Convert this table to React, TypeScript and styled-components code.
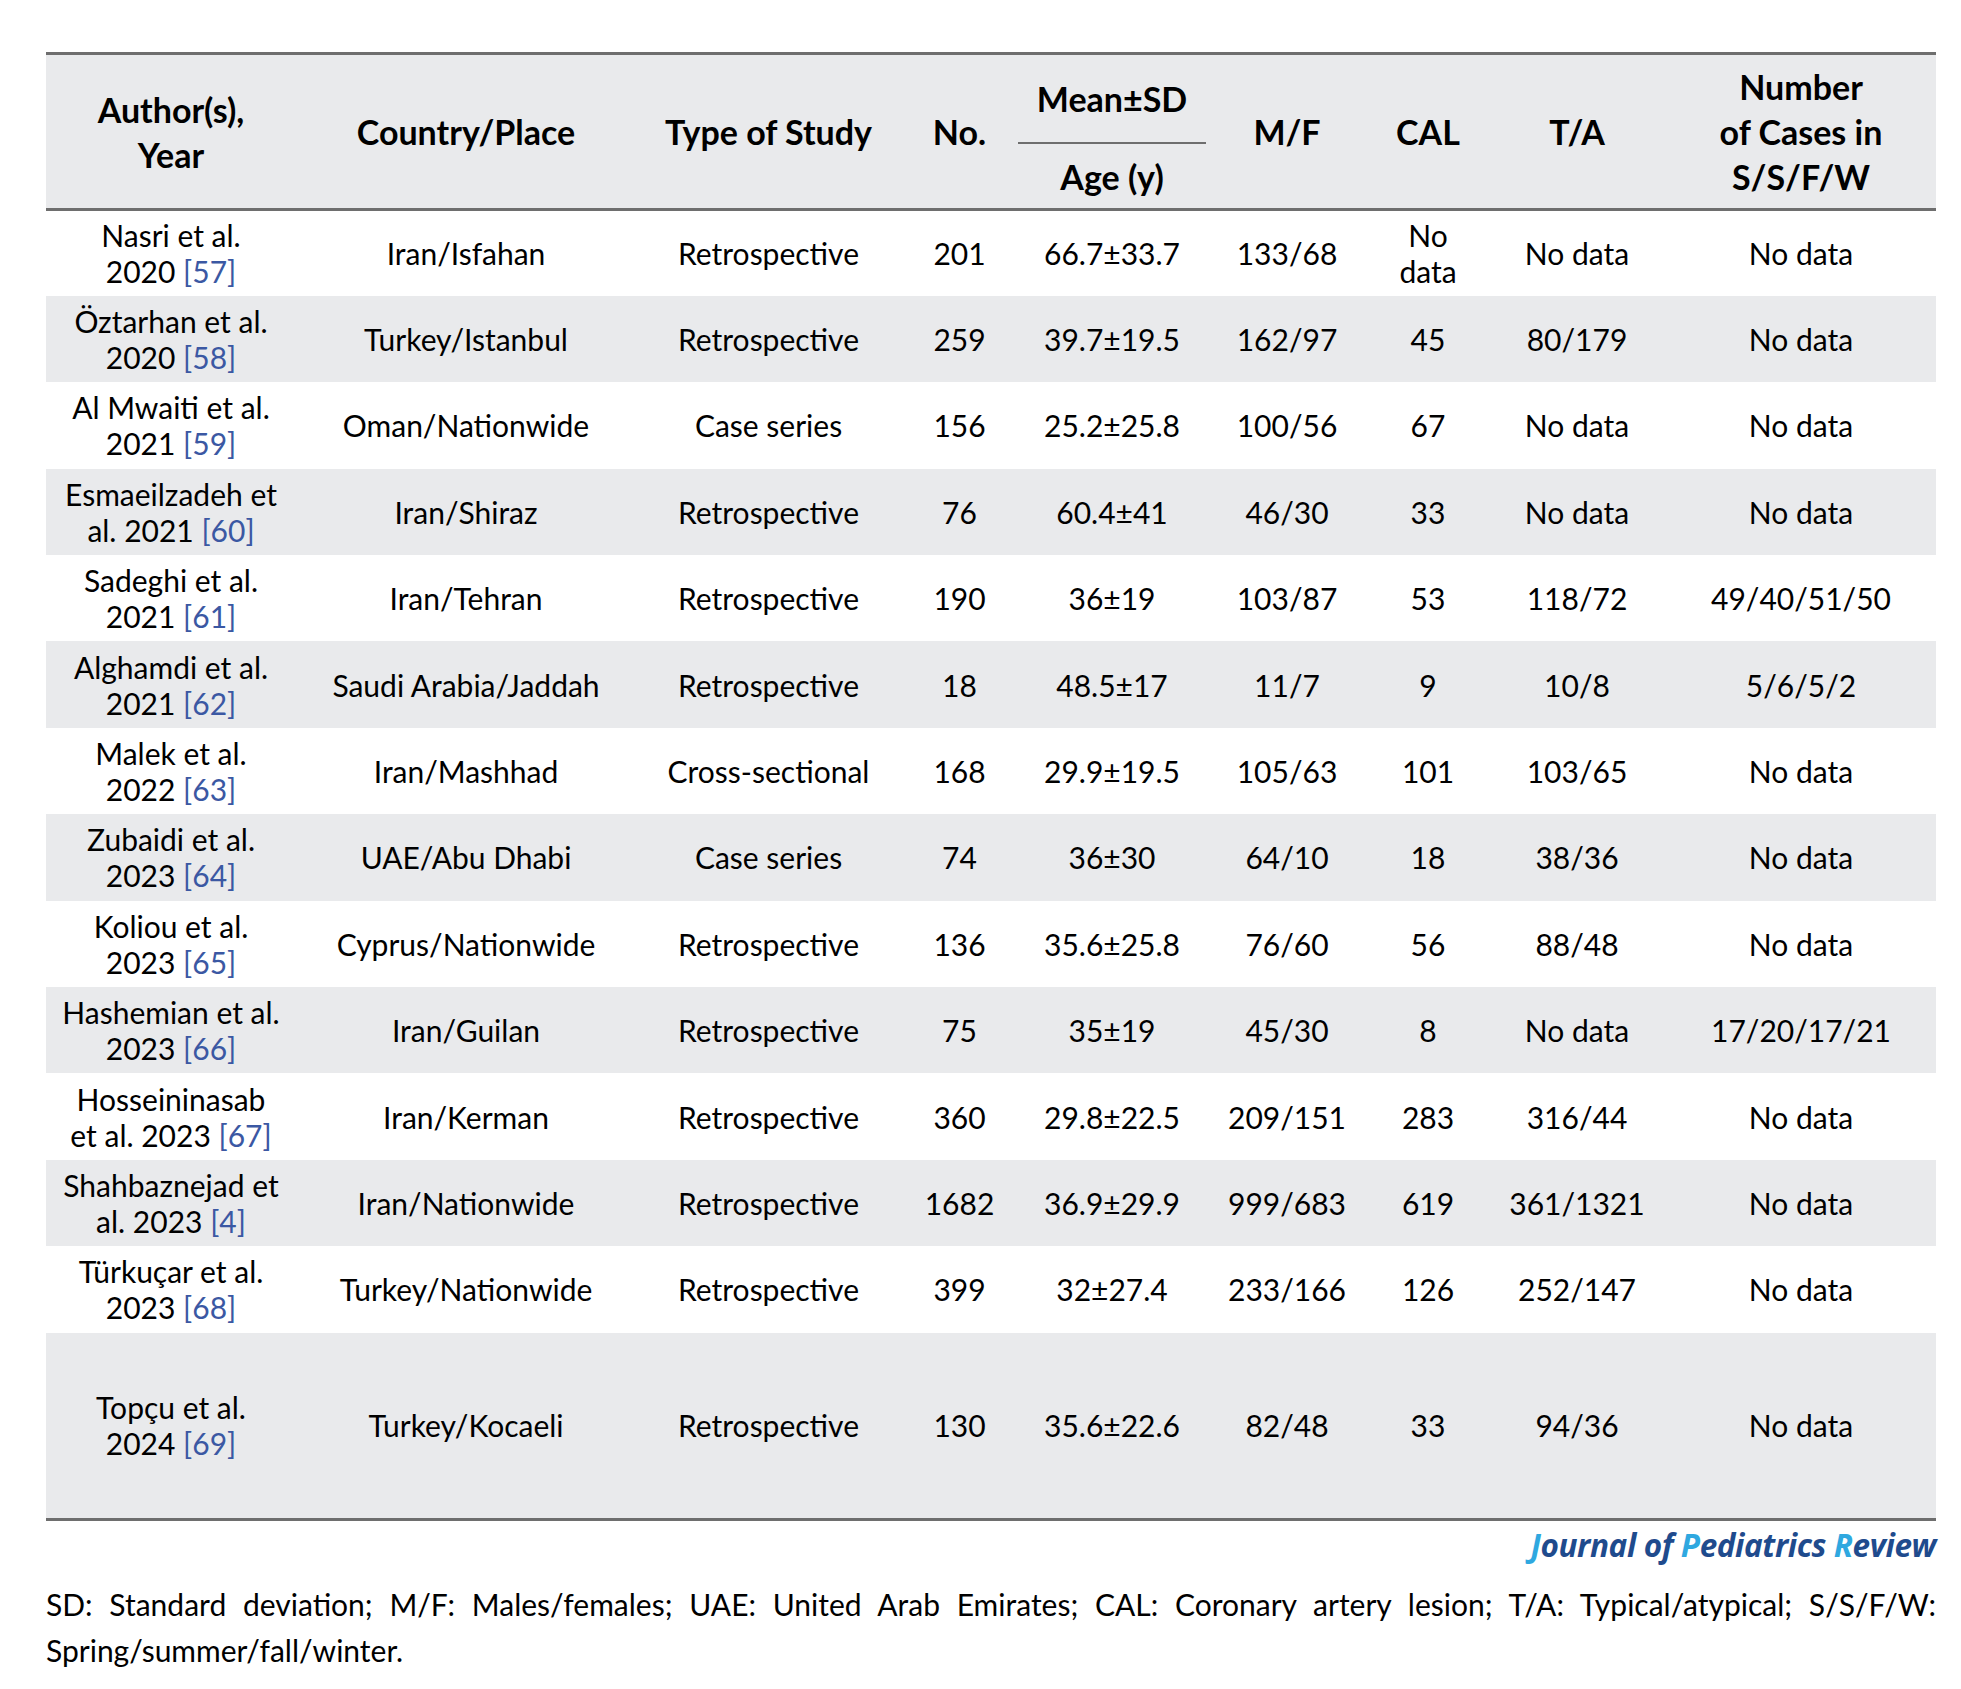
import React from "react";
import styled, { createGlobalStyle } from "styled-components";

const Global = createGlobalStyle`
  html, body { margin: 0; padding: 0; background: #ffffff; }
  body { font-family: Lato, "Open Sans", "Liberation Sans", sans-serif; color: #000; }
`;

const Page = styled.div`
  width: 1961px;
  padding: 52px 25px 0 46px;
  box-sizing: border-box;
`;

const Table = styled.table`
  width: 1890px;
  border-collapse: collapse;
  table-layout: fixed;
  border-top: 3px solid #6e6e6e;
  border-bottom: 3px solid #6e6e6e;
  font-size: 30px;
`;

const Head = styled.thead`
  background: #e9eaec;
  border-bottom: 3px solid #6e6e6e;
`;

const Th = styled.th<{ $split?: boolean; $h?: number }>`
  font-weight: 700;
  font-size: 34px;
  line-height: 45px;
  text-align: center;
  vertical-align: middle;
  padding: 0 2px;
  height: ${(p) => (p.$h ? `${p.$h}px` : "auto")};
  border-bottom: ${(p) => (p.$split ? "2px solid #6e6e6e" : "none")};
`;

const Row = styled.tr<{ $shade: boolean; $tall?: boolean }>`
  background: ${(p) => (p.$shade ? "#e9eaec" : "#ffffff")};
  height: ${(p) => (p.$tall ? "187px" : "86.4px")};
`;

const Td = styled.td`
  text-align: center;
  vertical-align: middle;
  line-height: 36px;
  padding: 0 2px;
`;

const Ref = styled.span`
  color: #3b58a3;
`;

const Brand = styled.div`
  width: 1890px;
  text-align: right;
  font-family: "Open Sans", Lato, sans-serif;
  font-style: italic;
  font-weight: 700;
  font-size: 31.5px;
  line-height: 44px;
  margin-top: 2px;
  color: #1f4b8d;
  letter-spacing: -0.4px;
`;

const Accent = styled.span`
  color: #2fa8e0;
`;

const Note = styled.p`
  width: 1890px;
  margin: 14px 0 0;
  font-size: 30px;
  line-height: 46px;
  text-align: justify;
`;

type R = {
  a: string;
  b: string;
  ref: string;
  place: string;
  type: string;
  no: string;
  age: string;
  mf: string;
  cal: React.ReactNode;
  ta: string;
  season: string;
};

const rows: R[] = [
  { a: "Nasri et al.", b: "2020", ref: "57", place: "Iran/Isfahan", type: "Retrospective", no: "201", age: "66.7±33.7", mf: "133/68", cal: (<>No<br />data</>), ta: "No data", season: "No data" },
  { a: "Öztarhan et al.", b: "2020", ref: "58", place: "Turkey/Istanbul", type: "Retrospective", no: "259", age: "39.7±19.5", mf: "162/97", cal: "45", ta: "80/179", season: "No data" },
  { a: "Al Mwaiti et al.", b: "2021", ref: "59", place: "Oman/Nationwide", type: "Case series", no: "156", age: "25.2±25.8", mf: "100/56", cal: "67", ta: "No data", season: "No data" },
  { a: "Esmaeilzadeh et", b: "al. 2021", ref: "60", place: "Iran/Shiraz", type: "Retrospective", no: "76", age: "60.4±41", mf: "46/30", cal: "33", ta: "No data", season: "No data" },
  { a: "Sadeghi et al.", b: "2021", ref: "61", place: "Iran/Tehran", type: "Retrospective", no: "190", age: "36±19", mf: "103/87", cal: "53", ta: "118/72", season: "49/40/51/50" },
  { a: "Alghamdi et al.", b: "2021", ref: "62", place: "Saudi Arabia/Jaddah", type: "Retrospective", no: "18", age: "48.5±17", mf: "11/7", cal: "9", ta: "10/8", season: "5/6/5/2" },
  { a: "Malek et al.", b: "2022", ref: "63", place: "Iran/Mashhad", type: "Cross-sectional", no: "168", age: "29.9±19.5", mf: "105/63", cal: "101", ta: "103/65", season: "No data" },
  { a: "Zubaidi et al.", b: "2023", ref: "64", place: "UAE/Abu Dhabi", type: "Case series", no: "74", age: "36±30", mf: "64/10", cal: "18", ta: "38/36", season: "No data" },
  { a: "Koliou et al.", b: "2023", ref: "65", place: "Cyprus/Nationwide", type: "Retrospective", no: "136", age: "35.6±25.8", mf: "76/60", cal: "56", ta: "88/48", season: "No data" },
  { a: "Hashemian et al.", b: "2023", ref: "66", place: "Iran/Guilan", type: "Retrospective", no: "75", age: "35±19", mf: "45/30", cal: "8", ta: "No data", season: "17/20/17/21" },
  { a: "Hosseininasab", b: "et al. 2023", ref: "67", place: "Iran/Kerman", type: "Retrospective", no: "360", age: "29.8±22.5", mf: "209/151", cal: "283", ta: "316/44", season: "No data" },
  { a: "Shahbaznejad et", b: "al. 2023", ref: "4", place: "Iran/Nationwide", type: "Retrospective", no: "1682", age: "36.9±29.9", mf: "999/683", cal: "619", ta: "361/1321", season: "No data" },
  { a: "Türkuçar et al.", b: "2023", ref: "68", place: "Turkey/Nationwide", type: "Retrospective", no: "399", age: "32±27.4", mf: "233/166", cal: "126", ta: "252/147", season: "No data" },
  { a: "Topçu et al.", b: "2024", ref: "69", place: "Turkey/Kocaeli", type: "Retrospective", no: "130", age: "35.6±22.6", mf: "82/48", cal: "33", ta: "94/36", season: "No data" },
];

const widths = [250, 340, 265, 117, 188, 162, 120, 178, 270];

export default function App() {
  return (
    <Page>
      <Global />
      <Table>
        <colgroup>
          {widths.map((w, i) => (
            <col key={i} style={{ width: `${w}px` }} />
          ))}
        </colgroup>
        <Head>
          <tr>
            <Th rowSpan={2}>Author(s),<br />Year</Th>
            <Th rowSpan={2}>Country/Place</Th>
            <Th rowSpan={2}>Type of Study</Th>
            <Th rowSpan={2}>No.</Th>
            <Th $split $h={87}>Mean±SD</Th>
            <Th rowSpan={2}>M/F</Th>
            <Th rowSpan={2}>CAL</Th>
            <Th rowSpan={2}>T/A</Th>
            <Th rowSpan={2}>Number<br />of Cases in<br />S/S/F/W</Th>
          </tr>
          <tr>
            <Th $h={64}>Age (y)</Th>
          </tr>
        </Head>
        <tbody>
          {rows.map((r, i) => (
            <Row key={i} $shade={i % 2 === 1} $tall={i === rows.length - 1}>
              <Td>
                {r.a}
                <br />
                {r.b} <Ref>[{r.ref}]</Ref>
              </Td>
              <Td>{r.place}</Td>
              <Td>{r.type}</Td>
              <Td>{r.no}</Td>
              <Td>{r.age}</Td>
              <Td>{r.mf}</Td>
              <Td>{r.cal}</Td>
              <Td>{r.ta}</Td>
              <Td>{r.season}</Td>
            </Row>
          ))}
        </tbody>
      </Table>
      <Brand>
        <Accent>J</Accent>ournal of <Accent>P</Accent>ediatrics <Accent>R</Accent>eview
      </Brand>
      <Note>
        SD: Standard deviation; M/F: Males/females; UAE: United Arab Emirates; CAL: Coronary artery lesion; T/A: Typical/atypical; S/S/F/W: Spring/summer/fall/winter.
      </Note>
    </Page>
  );
}
